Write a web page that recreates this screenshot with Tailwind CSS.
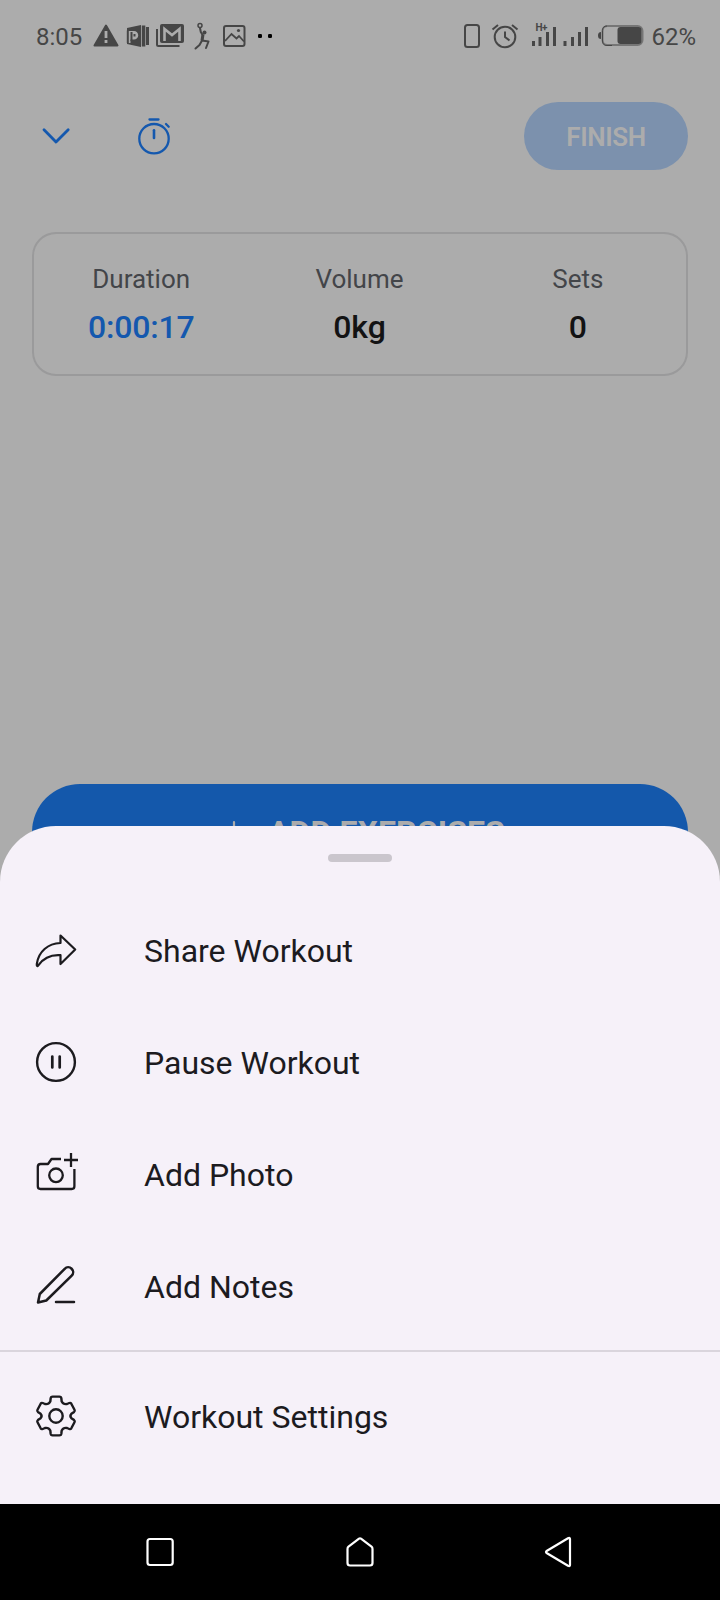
<!DOCTYPE html>
<html lang="en">
<head>
<meta charset="utf-8">
<title>Workout</title>
<script src="https://cdn.jsdelivr.net/npm/@tailwindcss/browser@4"></script>
</head>
<body class="bg-black">
<div class="w-[720px] h-[1600px] flex flex-col overflow-hidden bg-[#acacac] font-[Roboto,sans-serif] text-[#1c1b1f]">

  <!-- Status bar -->
  <header class="h-[72px] shrink-0 flex items-center pl-9 pr-6 text-[#464646] text-2xl leading-[72px]">
    <span class="w-[52px] pt-0.5">8:05</span>
    <svg class="w-[190px] h-[72px]" viewBox="88 0 190 72" fill="none" stroke="#464646" stroke-width="2">
      <path d="M106 25.500 117.500 45.500H94.500Z" fill="#464646" stroke-linejoin="round"/>
      <path d="M106 31v7M106 40v3" stroke="#acacac" stroke-width="2.800"/>
      <path d="M127 28 141 25V47L127 44Z" fill="#464646" stroke="none"/>
      <path d="M141.800 25.500h3.500v21h-3.500ZM146 27h3v18h-3Z" fill="#464646" stroke="none"/>
      <path d="M127 31H134a4 4 0 0 1 0 8.500h-3.500V43H127Z" fill="#acacac" stroke="none"/>
      <path d="M131.500 32v9M127.800 30.500V43M134.500 34v2.500" stroke-width="2"/>
      <rect x="160" y="24" width="24" height="19" rx="2" fill="#464646" stroke="none"/>
      <path d="M164.500 41V29L172 35 179.500 29V41" stroke="#acacac" stroke-width="2.600"/>
      <path d="M157 29V44.500Q157 46 158.500 46H179.500"/>
      <circle cx="200" cy="25.500" r="2" stroke-width="1.500"/>
      <circle cx="204.500" cy="32.500" r="2" fill="#464646" stroke="none"/>
      <path d="M200 28 200.800 32 203 35.500 202 40.500 208.500 41.500 206 48M202 40.500 199.500 45 195.500 48.500" stroke-linecap="round" stroke-linejoin="round"/>
      <path d="M203 34.500 202 40.500" stroke-width="3"/>
      <rect x="224" y="26" width="20.500" height="20" rx="2"/>
      <path d="M225 41 231.500 34 236.500 38.500 239 36 244 41.500" stroke-width="1.800"/>
      <circle cx="238.500" cy="30.500" r="1.600" fill="#464646" stroke="none"/>
      <rect x="258" y="34" width="4" height="4" rx="1.200" fill="#000" stroke="none"/>
      <rect x="268" y="34" width="4" height="4" rx="1.200" fill="#000" stroke="none"/>
    </svg>
    <svg class="w-[190px] h-[72px] ml-auto mr-[3px]" viewBox="458 0 190 72" fill="none" stroke="#464646" stroke-width="2">
      <rect x="465" y="25" width="14" height="22" rx="2.500"/>
      <circle cx="505" cy="37" r="10.300"/>
      <path d="M505 31.500V37L509.500 40.500M492.500 29.500 498 25M512 25 517.500 29.500"/>
      <path d="M533.500 41v5M540 37v9M547.500 32v14M554.500 27v19M565 41v5M572.500 37v9M579.500 32v14M586.500 27v19" stroke-width="3"/>
      <text x="535.500" y="31" font-size="10" font-weight="700" fill="#464646" stroke="none" textLength="12">H+</text>
      <rect x="602.500" y="26" width="40" height="19" rx="5" stroke="#767676"/>
      <path d="M612 45.500h-5q-4.500 0-4.500-4.500V30.500Q602.500 26 607 26" stroke-width="1"/>
      <rect x="617.500" y="27" width="24" height="17" rx="3" fill="#464646" stroke="none"/>
      <path d="M601 32v7q-3 0-3-3.500t3-3.500Z" fill="#464646" stroke="none"/>
    </svg>
    <span class="pt-0.5">62%</span>
  </header>

  <!-- Toolbar -->
  <div class="h-[128px] shrink-0 flex items-center px-8 text-[#1458ae]">
    <svg class="w-12 h-12" viewBox="32 112 48 48" fill="none" stroke="currentColor" stroke-width="2.800" stroke-linecap="round" stroke-linejoin="round"><path d="M44 129.800 56 142 68.200 129.800"/></svg>
    <svg class="w-12 h-12 ml-[50px]" viewBox="130 112 48 48" fill="none" stroke="currentColor" stroke-width="2.300" stroke-linecap="round"><circle cx="154" cy="138.700" r="14.700"/><path d="M149.500 119.500h9M166 124l2.700 2.700"/><path d="M154 130.300v7.700" stroke-width="2.600"/></svg>
    <div class="ml-auto w-[164px] h-[68px] pt-0.5 rounded-full bg-[#7c91ad] text-[#acacac] text-[26px] font-semibold tracking-[-0.4px] flex items-center justify-center">FINISH</div>
  </div>

  <!-- Summary -->
  <div class="mt-8 mx-8 h-36 shrink-0 rounded-3xl ring-2 ring-inset ring-[#9a9a9b] grid grid-cols-3 text-center pt-[27px] pr-px">
    <div><div class="text-[26px] leading-10 text-[#434549]">Duration</div><div class="text-[32px] leading-[48px] mt-1 font-medium tracking-[-0.2px] text-[#1458ae]">0:00:17</div></div>
    <div><div class="text-[26px] leading-10 text-[#434549]">Volume</div><div class="text-[32px] leading-[48px] mt-1 font-medium text-[#131314]">0kg</div></div>
    <div><div class="text-[26px] leading-10 text-[#434549]">Sets</div><div class="text-[32px] leading-[48px] mt-1 font-medium text-[#131314]">0</div></div>
  </div>

  <div class="mt-[408px] mx-8 h-24 shrink-0 rounded-full bg-[#1458ab] text-[#acacac] text-[32px] font-bold flex items-center pl-[190px] gap-[22px]">
    <svg class="w-6 h-6" viewBox="0 0 24 24" stroke="currentColor" stroke-width="2.200" stroke-linecap="round"><path d="M12 2v20M2 12h20"/></svg>
    <span class="tracking-[0.1px]">ADD EXERCISES</span>
  </div>

  <!-- Bottom sheet -->
  <section class="relative -mt-[54px] h-[678px] shrink-0 rounded-t-[56px] bg-[#f6f1f9] text-[32px]">
    <div class="pt-7 h-[68px]"><div class="mx-auto w-16 h-2 rounded bg-[#cac6cd]"></div></div>
    <div class="h-28 flex items-center px-8 gap-16">
      <svg class="w-12 h-12" viewBox="32 926 48 48" fill="none" stroke="currentColor" stroke-width="2.200" stroke-linejoin="round"><path d="M60.500 935.500 75.200 949.500 60.500 964V955.200C51 954.500 43.500 958 38.500 965.200 37.300 966.800 36.500 966 36.800 964 38.500 951.500 48 943.500 60.500 943Z"/></svg>
      <span class="pt-0.5">Share Workout</span>
    </div>
    <div class="h-28 flex items-center px-8 gap-16">
      <svg class="w-12 h-12" viewBox="32 1038 48 48" fill="none" stroke="currentColor" stroke-width="2.400" stroke-linecap="round"><circle cx="56" cy="1062" r="18.900"/><path d="M52.300 1056.500v11M59.700 1056.500v11" stroke-width="2.700"/></svg>
      <span class="pt-0.5">Pause Workout</span>
    </div>
    <div class="h-28 flex items-center px-8 gap-16">
      <svg class="w-12 h-12" viewBox="32 1150 48 48" fill="none" stroke="currentColor" stroke-width="2.300" stroke-linejoin="round"><path d="M61 1159H51.500L48 1164H40.500Q37.800 1164 37.800 1166.700V1186.300Q37.800 1189 40.500 1189H71.700Q74.400 1189 74.400 1186.300V1169M71 1153v14M64 1160h14"/><circle cx="56" cy="1175.300" r="6.800"/></svg>
      <span class="pt-0.5">Add Photo</span>
    </div>
    <div class="h-28 flex items-center px-8 gap-16">
      <svg class="w-12 h-12" viewBox="32 1262 48 48" fill="none" stroke="currentColor" stroke-width="2.500" stroke-linejoin="round" stroke-linecap="round"><path d="M38 1302.500 39.800 1294 64.700 1268.800A4.900 4.900 0 0 1 71.700 1275.700L46.300 1300.500Z"/><path d="M56 1302h18"/></svg>
      <span class="pt-0.5">Add Notes</span>
    </div>
    <div class="mt-2 mb-2 h-[2px] bg-[#dad5dd]"></div>
    <div class="h-28 flex items-center px-8 gap-16">
      <svg class="w-12 h-12" viewBox="-24 -24 48 48" fill="none" stroke="currentColor" stroke-width="2.400" stroke-linejoin="round"><path d="M-3.500-19.400H3.500Q5-19.400 5.300-18L5.700-14.500Q7.500-11.200 11-12L13.300-13Q14.600-13.500 15.300-12.300L18.500-6.300Q19.200-5 18.100-4.100L15.400-2.200Q13.400 0 15.400 2.200L18.100 4.100Q19.200 5 18.500 6.300L15.300 12.300Q14.600 13.500 13.300 13L11 12Q7.500 11.200 5.700 14.500L5.300 18Q5 19.400 3.500 19.400H-3.500Q-5 19.400-5.300 18L-5.700 14.500Q-7.500 11.200-11 12L-13.300 13Q-14.600 13.500-15.300 12.300L-18.500 6.300Q-19.200 5-18.100 4.100L-15.400 2.200Q-13.400 0-15.400-2.200L-18.100-4.100Q-19.200-5-18.500-6.300L-15.300-12.300Q-14.600-13.500-13.300-13L-11-12Q-7.500-11.200-5.700-14.500L-5.300-18Q-5-19.400-3.500-19.400Z"/><circle r="6.700"/></svg>
      <span class="pt-0.5">Workout Settings</span>
    </div>
  </section>

  <!-- Navigation bar -->
  <nav class="h-24 shrink-0 bg-black flex items-center justify-between px-[140px]">
    <svg class="w-10 h-10" viewBox="140 1532 40 40" fill="none" stroke="#fff" stroke-width="2.200"><rect x="147.500" y="1539" width="25.200" height="26" rx="2.500"/></svg>
    <svg class="w-10 h-10" viewBox="340 1532 40 40" fill="none" stroke="#fff" stroke-width="2.200" stroke-linejoin="round"><path d="M359 1538.700Q360 1538 361 1538.700L371.500 1546.700Q372.500 1547.500 372.500 1549V1563Q372.500 1565.500 370 1565.500H350Q347.500 1565.500 347.500 1563V1549Q347.500 1547.500 348.500 1546.700Z"/></svg>
    <svg class="w-10 h-10" viewBox="540 1532 40 40" fill="none" stroke="#fff" stroke-width="2.200" stroke-linejoin="round"><path d="M568 1538.200Q570 1537.200 570 1539V1565Q570 1566.800 568 1565.800L547 1553.200Q545 1552 547 1550.800Z"/></svg>
  </nav>
</div>
</body>
</html>
